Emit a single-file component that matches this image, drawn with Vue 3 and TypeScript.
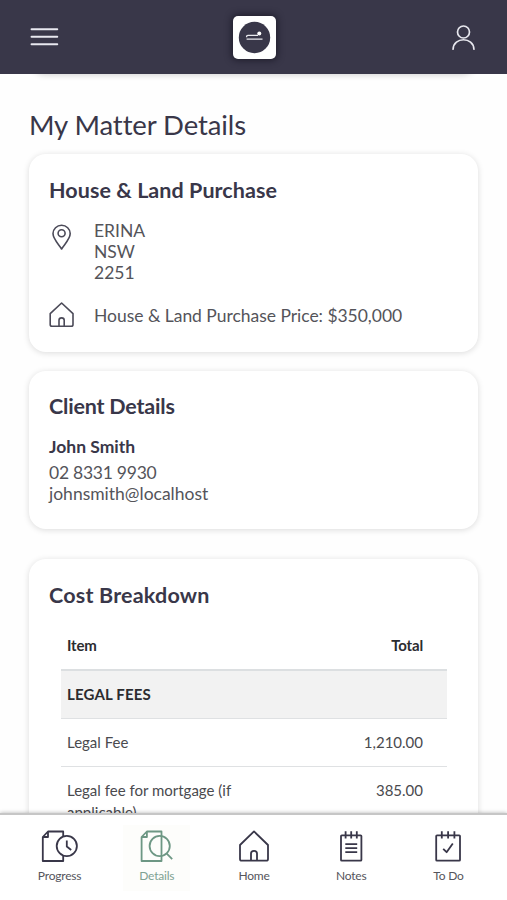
<script setup lang="ts">
interface CostRow {
  item: string
  total: string
}

interface Tab {
  id: string
  label: string
  active?: boolean
}

const address: string[] = ['ERINA', 'NSW', '2251']

const rows: CostRow[] = [
  { item: 'Legal Fee', total: '1,210.00' },
  { item: 'Legal fee for mortgage (if applicable)', total: '385.00' },
]

const tabs: Tab[] = [
  { id: 'progress', label: 'Progress' },
  { id: 'details', label: 'Details', active: true },
  { id: 'home', label: 'Home' },
  { id: 'notes', label: 'Notes' },
  { id: 'todo', label: 'To Do' },
]
</script>

<template>
  <div class="app">
    <header class="topbar">
      <svg class="menu" width="30" height="22" viewBox="0 0 30 22">
        <path d="M2.5 3.2H28.3M2.5 10.8H28.3M2.5 18.3H28.3" />
      </svg>
      <div class="logo">
        <svg width="33" height="33" viewBox="0 0 33 33">
          <circle cx="16.5" cy="16.5" r="15.7" fill="#393749" />
          <path d="M24.5 18.2H8.6M8.6 16.2V15.4Q8.6 14.3 9.8 14.3H20" fill="none" stroke="#e9e9ee" stroke-width="1.3" />
          <circle cx="21.3" cy="12.4" r="2" fill="#fff" />
        </svg>
      </div>
      <svg class="user" width="26" height="28" viewBox="0 0 26 28">
        <circle cx="13.5" cy="9" r="6" />
        <path d="M3.1 26.2C3.5 13.6 23.5 13.6 23.9 26.2" />
      </svg>
    </header>

    <main class="content">
      <div class="card previous"></div>
      <h1>My Matter Details</h1>

      <section class="card matter">
        <h2 class="t-house">House &amp; Land Purchase</h2>
        <div class="row">
          <svg class="line-icon" width="26" height="32" viewBox="0 0 26 32">
            <path d="M12.6 29C10.3 24.8 4 19.3 4 13.6A8.6 8.3 0 0 1 21.2 13.6C21.2 19.3 14.9 24.8 12.6 29Z" />
            <circle cx="12.6" cy="13.2" r="3.5" />
          </svg>
          <div class="address">
            <div v-for="line in address" :key="line">{{ line }}</div>
          </div>
        </div>
        <div class="row price">
          <svg class="line-icon" width="26" height="28" viewBox="0 0 26 28">
            <path d="M1.2 12.7L12.6 2L24 12.7V23.4Q24 25.2 22.2 25.2H3Q1.2 25.2 1.2 23.4ZM10 25V19.2Q10 16.9 12.6 16.9Q15.2 16.9 15.2 19.2V25" />
          </svg>
          <div>House &amp; Land Purchase Price: $350,000</div>
        </div>
      </section>

      <section class="card client">
        <h2 class="t-client">Client Details</h2>
        <div class="name">John Smith</div>
        <div class="phone">02 8331 9930</div>
        <div class="email">johnsmith@localhost</div>
      </section>

      <section class="card costs">
        <h2 class="t-cost">Cost Breakdown</h2>
        <div class="table">
          <div class="tr head"><span>Item</span><span>Total</span></div>
          <div class="tr group"><span>LEGAL FEES</span></div>
          <div v-for="row in rows" :key="row.item" class="tr">
            <span class="item">{{ row.item }}</span><span>{{ row.total }}</span>
          </div>
        </div>
      </section>
    </main>

    <nav class="tabs">
      <div v-for="tab in tabs" :key="tab.id" class="tab" :class="[tab.id, { active: tab.active }]">
        <svg width="38" height="34" viewBox="0 0 38 34">
          <template v-if="tab.id === 'progress'">
            <path d="M22.2 7.6V2.5H7L1.8 8V32H22.2V26.4M1.8 8H7V2.5" />
            <circle cx="25.8" cy="17" r="10.1" />
            <path d="M25.8 11.5V17.5L30.2 21" />
          </template>
          <template v-else-if="tab.id === 'details'">
            <path d="M23.5 2.5H8.9L3.6 8V32H23.5ZM3.6 8H8.9V2.5" />
            <circle cx="21.7" cy="17" r="10.1" />
            <path d="M28.5 24.4L34.2 30.2" />
          </template>
          <template v-else-if="tab.id === 'home'">
            <path d="M5 16L19 2.4L33 16V29.9Q33 31.7 31.2 31.7H6.8Q5 31.7 5 29.9ZM16 31.5V24.5Q16 21.8 19 21.8Q22 21.8 22 24.5V31.5" />
          </template>
          <template v-else-if="tab.id === 'notes'">
            <rect x="9" y="6.3" width="20.4" height="25.4" rx="0.8" />
            <path d="M13.6 2.2V9.4M19.2 2.2V9.4M24.8 2.2V9.4M13.3 15.2H25.2M13.3 19.2H25.2M13.3 23.2H25.2" />
          </template>
          <template v-else>
            <rect x="7.2" y="6.3" width="23.8" height="25.4" rx="0.8" />
            <path d="M12.8 2.2V9.4M19.1 2.2V9.4M25.4 2.2V9.4M14.2 19.8L17.6 23.2L23.8 14.4" />
          </template>
        </svg>
        <span>{{ tab.label }}</span>
      </div>
    </nav>
  </div>
</template>

<style>
body {
  margin: 0;
  overflow: hidden;
}
</style>

<style scoped>
.app {
  display: flex;
  flex-direction: column;
  height: 900px;
  overflow: hidden;
  background: #fefefe;
  color: #54545a;
  font-family: Lato, 'Liberation Sans', sans-serif;
}

.app * {
  box-sizing: border-box;
}

.topbar {
  display: flex;
  flex: none;
  align-items: center;
  justify-content: space-between;
  height: 74px;
  padding: 0 31px 0 29px;
  background: #393749;
}

.topbar .menu,
.topbar .user {
  fill: none;
  stroke: #e8e8ef;
  stroke-width: 1.9;
  stroke-linecap: round;
}

.topbar .user {
  stroke-width: 1.7;
}

.logo {
  display: flex;
  align-items: center;
  justify-content: center;
  width: 43px;
  height: 43px;
  border-radius: 5px;
  background: #fff;
  box-shadow: 0 0 6px 2px rgba(20, 18, 32, 0.6);
}

.content {
  flex: none;
  height: 739px;
  padding: 0 29px;
  overflow: hidden;
}

.card {
  border-radius: 17px;
  padding: 0 20px;
  background: #fff;
  box-shadow: 0 1px 6px rgba(0, 0, 0, 0.14);
}

.previous {
  height: 40px;
  margin-top: -40px;
  box-shadow: 0 1px 6px rgba(0, 0, 0, 0.18);
}

h1 {
  height: 80px;
  margin: 0;
  padding-top: 33px;
  color: #393749;
  font-size: 27.5px;
  font-weight: 400;
  line-height: 36px;
  letter-spacing: -0.1px;
}

h2 {
  margin: 0;
  color: #393749;
  font-size: 21.5px;
  font-weight: 700;
  line-height: 28px;
}

.t-house {
  letter-spacing: 0.06px;
}

.t-client {
  letter-spacing: -0.2px;
}

.t-cost {
  letter-spacing: 0.2px;
}

.matter {
  height: 198px;
  padding-top: 22px;
  font-size: 17.5px;
  line-height: 21px;
}

.row {
  display: flex;
  gap: 19px;
  margin-top: 16px;
}

.row.price {
  align-items: center;
  margin-top: 18px;
  letter-spacing: -0.03px;
}

.line-icon {
  flex: none;
  fill: none;
  stroke: #4b4a58;
  stroke-width: 1.6;
  stroke-linejoin: round;
}

.client {
  height: 158px;
  margin-top: 19px;
  padding-top: 21px;
  font-size: 17.5px;
  line-height: 21px;
}

.name {
  margin: 16px 0 5px;
  color: #393749;
  font-weight: 700;
}

.phone {
  letter-spacing: -0.25px;
}

.costs {
  height: 320px;
  margin-top: 30px;
  padding-top: 22px;
}

.table {
  width: 386px;
  margin: 13px 0 0 12px;
  font-size: 15px;
  line-height: 22px;
  color: #4a4a4e;
}

.tr {
  display: flex;
  justify-content: space-between;
  min-height: 48px;
  padding: 12px 24px 12px 6px;
  border-bottom: 1px solid #dfe1e3;
}

.head {
  height: 49px;
  border-bottom: 2px solid #dcdfe1;
  color: #2b2c30;
  font-weight: 700;
  letter-spacing: -0.15px;
}

.group {
  background: #f2f2f2;
  color: #2b2c30;
  font-weight: 700;
  letter-spacing: 0.15px;
}

.item {
  width: 190px;
}

.tabs {
  position: relative;
  display: flex;
  flex: 1;
  padding: 10px 10px 0 11px;
  border-top: 2px solid #c6c6c6;
  background: #fff;
  box-shadow: 0 0 4px rgba(0, 0, 0, 0.3);
}

.tab {
  display: flex;
  flex: 1;
  flex-direction: column;
  align-items: center;
  height: 66px;
  margin: 0 15px;
  padding-top: 4px;
  color: #55555c;
  font-size: 12px;
  line-height: 16px;
  letter-spacing: -0.2px;
}

.tab svg {
  flex: none;
  margin-bottom: 5px;
  fill: none;
  stroke: #393749;
  stroke-width: 1.8;
  stroke-linejoin: round;
}

.tab.active {
  background: #fdfdfb;
  color: #80a293;
}

.tab.active svg {
  stroke: #6d9784;
}
</style>
